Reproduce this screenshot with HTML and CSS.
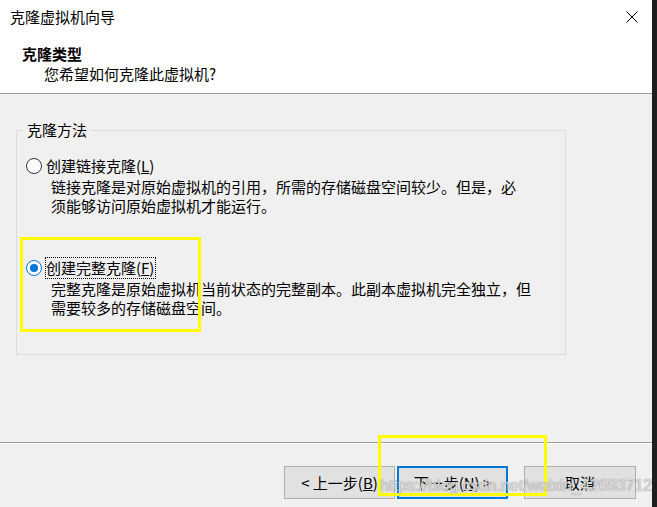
FILE: index.html
```html
<!DOCTYPE html>
<html lang="zh-CN">
<head>
<meta charset="utf-8">
<title>克隆虚拟机向导</title>
<link rel="stylesheet" href="styles.css">
</head>
<body>
<div class="window">
  <div class="header">
    <div class="titlebar">
      <span class="title">克隆虚拟机向导</span>
      <svg class="close" width="12" height="12" viewBox="0 0 12 12"><path d="M0.5 0.5 L11.5 11.5 M11.5 0.5 L0.5 11.5" stroke="#000" stroke-width="1" fill="none"/></svg>
    </div>
    <div class="heading">克隆类型</div>
    <div class="subtitle">您希望如何克隆此虚拟机?</div>
  </div>
  <div class="content">
    <div class="group">
      <div class="group-label">克隆方法</div>
      <div class="option first">
        <div class="opt-row">
          <span class="radio"></span>
          <span class="opt-label">创建链接克隆(<u>L</u>)</span>
        </div>
        <div class="opt-desc">链接克隆是对原始虚拟机的引用，所需的存储磁盘空间较少。但是，必<br>须能够访问原始虚拟机才能运行。</div>
      </div>
      <div class="option second">
        <div class="opt-row">
          <span class="radio on"></span>
          <span class="opt-label focus">创建完整克隆(<u>F</u>)</span>
        </div>
        <div class="opt-desc">完整克隆是原始虚拟机当前状态的完整副本。此副本虚拟机完全独立，但<br>需要较多的存储磁盘空间。</div>
      </div>
    </div>
  </div>
  <div class="footer">
    <div class="btn">&lt; 上一步(<u>B</u>)</div>
    <div class="btn default">下一步(<u>N</u>) &gt;</div>
    <div class="btn cancel">取消</div>
  </div>
  <div class="mark mark-option"></div>
  <div class="mark mark-next"></div>
  <div class="watermark">https://blog.csdn.net/weixin_42693712</div>
</div>
</body>
</html>
```

FILE: styles.css
```css
html, body {
  margin: 0;
  padding: 0;
  background: #f0f0f0;
}

.window {
  position: relative;
  width: 652px;
  height: 507px;
  border-right: 5px solid #1e1e1e;
  background: #f0f0f0;
  display: flex;
  flex-direction: column;
  font-family: "Noto Sans CJK SC", "Microsoft YaHei", sans-serif;
  font-size: 15px;
  line-height: 20px;
  color: #000;
  overflow: hidden;
}

.header {
  background: #fff;
  height: 94px;
  box-sizing: border-box;
  border-bottom: 1px solid #a0a0a0;
  flex: none;
}

.titlebar {
  height: 34px;
  display: flex;
  align-items: center;
  justify-content: space-between;
  padding: 0 14px 0 10px;
}

.close {
  display: block;
}

.heading {
  margin-top: 10px;
  padding-left: 22px;
  font-weight: bold;
}

.subtitle {
  padding-left: 44px;
}

.content {
  flex: 1;
  padding: 36px 0 0 16px;
}

.group {
  width: 550px;
  height: 225px;
  box-sizing: border-box;
  border: 1px solid #dcdcdc;
}

.group-label {
  width: fit-content;
  margin: -11px 0 0 6px;
  padding: 0 4px;
  background: #f0f0f0;
}

.option.first {
  margin-top: 16px;
}

.option.second {
  margin-top: 43px;
}

.opt-row {
  display: flex;
  align-items: center;
  height: 20px;
}

.radio {
  width: 16px;
  height: 16px;
  box-sizing: border-box;
  border: 1px solid #333;
  border-radius: 50%;
  background: #fff;
  margin: 0 4px 0 9px;
  flex: none;
  display: flex;
  align-items: center;
  justify-content: center;
}

.radio.on {
  border-color: #0078d7;
}

.radio.on::after {
  content: "";
  width: 8px;
  height: 8px;
  border-radius: 50%;
  background: #0078d7;
}

.opt-label {
  white-space: nowrap;
}

.opt-label.focus {
  outline: 1px dotted #000;
  outline-offset: 0;
  padding: 0 1px 0 0;
}

.opt-desc {
  padding-left: 34px;
  margin-top: 1px;
  line-height: 19px;
  white-space: nowrap;
}

.footer {
  flex: none;
  height: 65px;
  box-sizing: border-box;
  border-top: 1px solid #a0a0a0;
  box-shadow: inset 0 1px 0 #fff;
  padding: 23px 16px 0 0;
  display: flex;
  justify-content: flex-end;
  align-items: flex-start;
}

.btn {
  width: 111px;
  height: 33px;
  box-sizing: border-box;
  border: 1px solid #adadad;
  background: #e1e1e1;
  display: flex;
  align-items: center;
  justify-content: center;
  white-space: nowrap;
}

.btn.default {
  margin-left: 2px;
  border: 2px solid #0078d7;
}

.btn.cancel {
  width: 112px;
  margin-left: 16px;
}

.mark {
  position: absolute;
  box-sizing: border-box;
  border: 3px solid #ffff00;
}

.mark-option {
  left: 20px;
  top: 237px;
  width: 181px;
  height: 95px;
}

.mark-next {
  left: 378px;
  top: 435px;
  width: 169px;
  height: 61px;
}

.watermark {
  position: absolute;
  left: 380px;
  top: 477px;
  font-family: "Liberation Sans", Arial, sans-serif;
  font-size: 16px;
  line-height: 18px;
  color: rgba(235, 235, 235, 0.85);
  text-shadow: 0 0 1px rgba(110, 110, 110, 0.7), 0 0 1px rgba(110, 110, 110, 0.5);
  white-space: nowrap;
}
```
